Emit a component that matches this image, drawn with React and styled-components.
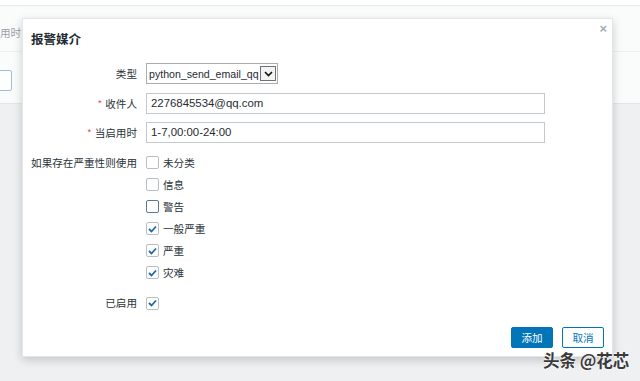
import React from 'react';
import styled, { createGlobalStyle } from 'styled-components';

const GlobalStyle = createGlobalStyle`
    html, body {
        margin: 0;
        padding: 0;
        background: #eef0f2;
        font-family: Arial, "Liberation Sans", "Noto Sans CJK SC", sans-serif;
    }
`;

const Page = styled.div`
    position: relative;
    width: 640px;
    height: 381px;
    overflow: hidden;
    background: #eef0f2;
`;

const TopStrip = styled.div`
    height: 5px;
    background: #fff;
    border-bottom: 1px solid #e6e9eb;
`;

const BackPanel = styled.div`
    height: 97px;
    background: #fafbfb;
    border-bottom: 1px solid #e3e6e8;
    > div.caption {
        height: 46px;
        padding-top: 19px;
        box-sizing: border-box;
        font-size: 10.6px;
        color: #9aa2a8;
        font-family: "Noto Sans CJK SC", sans-serif;
        border-bottom: 1px solid #eceff1;
    }
`;

const BackInput = styled.div`
    margin-top: 18px;
    margin-left: -10px;
    width: 20px;
    height: 19px;
    border: 1px solid #9fbfd6;
    border-radius: 2px;
    background: #fff;
`;

const Dialog = styled.div`
    position: absolute;
    left: 22px;
    top: 18px;
    width: 591px;
    height: 339px;
    box-sizing: border-box;
    background: #fff;
    border: 1px solid #e2e6e8;
    box-shadow: 0 3px 9px rgba(0, 0, 0, 0.18);
    display: flex;
    flex-direction: column;
    color: #1f2c33;
`;

const Header = styled.div`
    padding: 13px 8px 0;
    height: 44px;
    box-sizing: border-box;
    font-size: 12.5px;
    line-height: 14px;
    font-weight: bold;
    color: #1f2c33;
    font-family: "Noto Sans CJK SC", sans-serif;
`;

const Close = styled.span`
    position: absolute;
    top: 3px;
    right: 5px;
    font-size: 13px;
    line-height: 13px;
    color: #a6acb0;
    font-weight: bold;
    cursor: pointer;
`;

const Form = styled.div`
    flex: 1;
    display: grid;
    grid-template-columns: 106px 1fr;
    column-gap: 9px;
    row-gap: 8.5px;
    padding: 0 8px;
    align-content: start;
`;

const Label = styled.div`
    text-align: right;
    font-size: 10.6px;
    line-height: ${(p) => p.$lh || 21}px;
    white-space: nowrap;
    font-family: "Noto Sans CJK SC", sans-serif;
    color: #2b3338;
    > span {
        color: #e45959;
        margin-right: 3px;
        font-size: 10px;
    }
`;

const Select = styled.div`
    width: 132px;
    height: 21px;
    box-sizing: border-box;
    border: 1px solid #a9adb0;
    display: flex;
    align-items: center;
    padding-left: 2px;
    font-size: 10.6px;
    color: #1f2c33;
    > span.txt {
        flex: 1;
        white-space: nowrap;
        overflow: hidden;
    }
`;

const DropBtn = styled.span`
    width: 16px;
    height: 15px;
    margin-right: 1px;
    box-sizing: border-box;
    border: 1px solid #6d7378;
    background: #f3f3f3;
    display: flex;
    align-items: center;
    justify-content: center;
`;

const TextInput = styled.div`
    width: 399px;
    height: 21px;
    box-sizing: border-box;
    border: 1px solid #c3c9cc;
    padding-left: 4px;
    font-size: 11.4px;
    line-height: 19px;
    color: #1f2c33;
`;

const CheckList = styled.div`
    display: flex;
    flex-direction: column;
`;

const CheckRow = styled.div`
    height: 22px;
    display: flex;
    align-items: center;
    gap: 4px;
    font-size: 10.6px;
    font-family: "Noto Sans CJK SC", sans-serif;
    color: #2b3338;
`;

const Box = styled.span`
    width: 13px;
    height: 13px;
    box-sizing: border-box;
    border: 1px solid ${(p) => (p.$focus ? '#5d7891' : '#b8bec2')};
    border-radius: 2px;
    background: #fff;
    display: flex;
    align-items: center;
    justify-content: center;
`;

const Footer = styled.div`
    display: flex;
    justify-content: flex-end;
    gap: 9px;
    padding: 0 8px 8px;
`;

const Button = styled.button`
    width: 42px;
    height: 21px;
    box-sizing: border-box;
    border: 1px solid #0275b8;
    border-radius: 2px;
    background: ${(p) => (p.$primary ? '#0275b8' : '#fff')};
    color: ${(p) => (p.$primary ? '#fff' : '#0275b8')};
    font-size: 10.6px;
    font-family: "Noto Sans CJK SC", sans-serif;
    padding: 0;
    cursor: pointer;
`;

const Watermark = styled.div`
    position: absolute;
    left: 543px;
    top: 349px;
    font-size: 16.5px;
    line-height: 22px;
    font-weight: bold;
    color: #3a3a3a;
    font-family: "Noto Sans CJK SC", sans-serif;
    text-shadow: 0 0 2px #fff, 0 0 2px #fff;
`;

const Check = () => (
    <svg width="9" height="8" viewBox="0 0 9 8">
        <polyline points="1,4 3.5,6.5 8,1.5" fill="none" stroke="#1f68a8" strokeWidth="1.8" />
    </svg>
);

const Chevron = () => (
    <svg width="9" height="6" viewBox="0 0 9 6">
        <polyline points="1,1 4.5,4.5 8,1" fill="none" stroke="#111" strokeWidth="1.6" />
    </svg>
);

const severities = [
    { name: '未分类', checked: false },
    { name: '信息', checked: false },
    { name: '警告', checked: false, focus: true },
    { name: '一般严重', checked: true },
    { name: '严重', checked: true },
    { name: '灾难', checked: true },
];

const App = () => {
    return (
        <Page>
            <GlobalStyle />
            <TopStrip />
            <BackPanel>
                <div className="caption">用时</div>
                <BackInput />
            </BackPanel>

            <Dialog>
                <Header>报警媒介</Header>
                <Close>×</Close>
                <Form>
                    <Label>类型</Label>
                    <Select>
                        <span className="txt">python_send_email_qq</span>
                        <DropBtn>
                            <Chevron />
                        </DropBtn>
                    </Select>

                    <Label>
                        <span>*</span>收件人
                    </Label>
                    <TextInput>2276845534@qq.com</TextInput>

                    <Label>
                        <span>*</span>当启用时
                    </Label>
                    <TextInput>1-7,00:00-24:00</TextInput>

                    <Label $lh={22}>如果存在严重性则使用</Label>
                    <CheckList>
                        {severities.map((s) => (
                            <CheckRow key={s.name}>
                                <Box $focus={s.focus}>{s.checked && <Check />}</Box>
                                {s.name}
                            </CheckRow>
                        ))}
                    </CheckList>

                    <Label $lh={22}>已启用</Label>
                    <CheckRow>
                        <Box>
                            <Check />
                        </Box>
                    </CheckRow>
                </Form>
                <Footer>
                    <Button $primary>添加</Button>
                    <Button>取消</Button>
                </Footer>
            </Dialog>

            <Watermark>头条 @花芯</Watermark>
        </Page>
    );
};

export default App;
